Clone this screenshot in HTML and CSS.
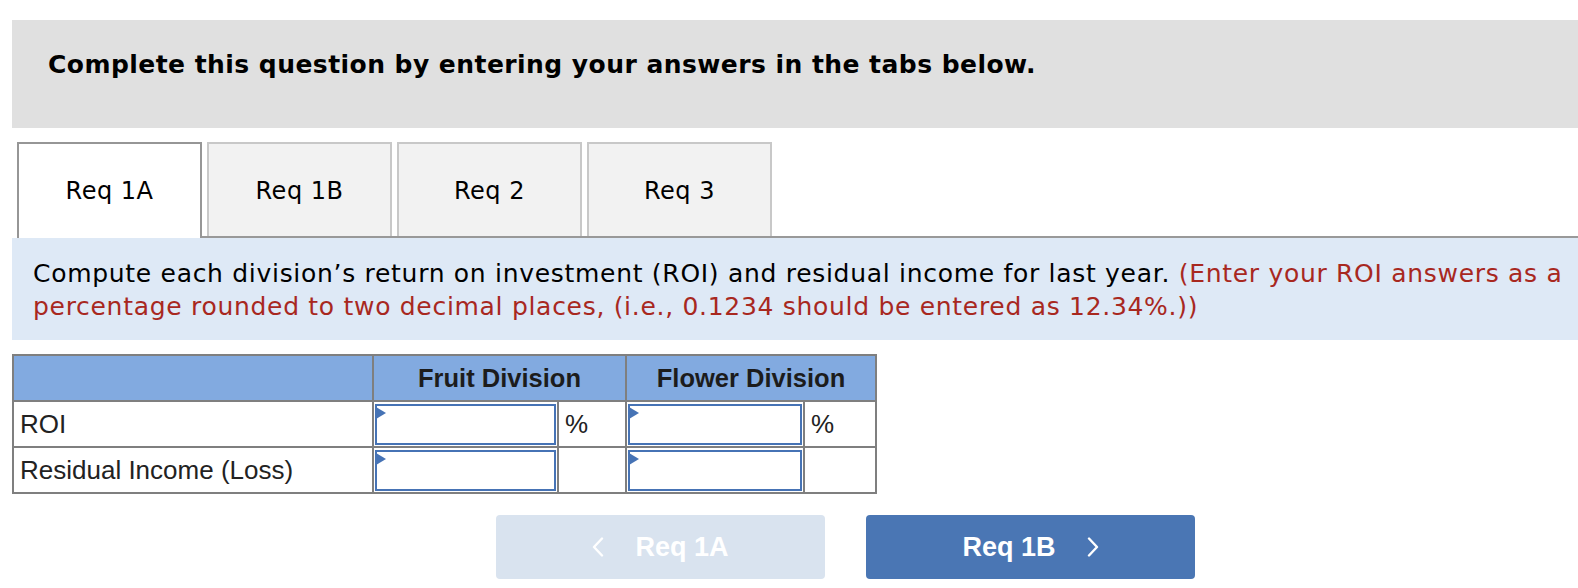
FILE: index.html
```html
<!DOCTYPE html>
<html lang="en">
<head>
<meta charset="utf-8">
<title>Complete this question</title>
<link rel="stylesheet" href="styles.css">
</head>
<body>
<div class="page">
  <div class="banner">Complete this question by entering your answers in the tabs below.</div>

  <div class="tabs">
    <div class="tab active">Req 1A</div>
    <div class="tab">Req 1B</div>
    <div class="tab">Req 2</div>
    <div class="tab">Req 3</div>
  </div>

  <div class="instructions">Compute each division’s return on investment (ROI) and residual income for last year. <span class="hint">(Enter your ROI answers as a percentage rounded to two decimal places, (i.e., 0.1234 should be entered as 12.34%.))</span></div>

  <table class="grid">
    <colgroup>
      <col class="c-label">
      <col class="c-in1">
      <col class="c-pct1">
      <col class="c-in2">
      <col class="c-pct2">
    </colgroup>
    <thead>
      <tr>
        <th></th>
        <th colspan="2">Fruit Division</th>
        <th colspan="2">Flower Division</th>
      </tr>
    </thead>
    <tbody>
      <tr>
        <td class="label">ROI</td>
        <td class="entry"><div class="box"></div></td>
        <td class="unit">%</td>
        <td class="entry"><div class="box"></div></td>
        <td class="unit">%</td>
      </tr>
      <tr>
        <td class="label">Residual Income (Loss)</td>
        <td class="entry"><div class="box"></div></td>
        <td class="unit"></td>
        <td class="entry"><div class="box"></div></td>
        <td class="unit"></td>
      </tr>
    </tbody>
  </table>

  <div class="nav">
    <div class="btn prev">
      <svg class="chev" width="12" height="20" viewBox="0 0 12 20"><polyline points="10,1.5 2,10 10,18.5" fill="none" stroke="#fff" stroke-width="2.4" stroke-linecap="round" stroke-linejoin="round"/></svg>
      <span>Req 1A</span>
    </div>
    <div class="btn next">
      <span>Req 1B</span>
      <svg class="chev" width="12" height="20" viewBox="0 0 12 20"><polyline points="2,1.5 10,10 2,18.5" fill="none" stroke="#fff" stroke-width="2.4" stroke-linecap="round" stroke-linejoin="round"/></svg>
    </div>
  </div>
</div>
</body>
</html>
```
FILE: styles.css
```css
html, body {
  margin: 0;
  padding: 0;
  background: #ffffff;
}

.page {
  padding: 20px 0 0 12px;
  font-family: Verdana, "DejaVu Sans", sans-serif;
  color: #000;
}

.banner {
  box-sizing: border-box;
  height: 108px;
  background: #e0e0e0;
  padding: 30px 0 0 36px;
  font-weight: bold;
  font-size: 25px;
  letter-spacing: 0.45px;
  line-height: 30px;
}

.tabs {
  display: flex;
  gap: 5px;
  margin: 14px 0 0 5px;
  border-bottom: 2px solid #999999;
}

.tab {
  box-sizing: border-box;
  width: 185px;
  height: 94px;
  display: flex;
  align-items: center;
  justify-content: center;
  background: #f2f2f2;
  border: 2px solid #c8c8c8;
  border-bottom: none;
  font-size: 24px;
  letter-spacing: 0.5px;
  padding-top: 2px;
}

.tab.active {
  background: #ffffff;
  border-color: #969696;
  height: 96px;
  margin-bottom: -2px;
  padding-top: 0;
}

.instructions {
  box-sizing: border-box;
  height: 102px;
  background: #dee9f6;
  padding: 19px 0 0 21px;
  font-size: 25px;
  letter-spacing: 0.7px;
  line-height: 33px;
}

.hint {
  color: #a8281f;
}

.grid {
  margin-top: 14px;
  border-collapse: collapse;
  table-layout: fixed;
  width: 865px;
  font-family: Arial, "Liberation Sans", sans-serif;
  font-size: 26px;
  color: #222;
}

.c-label { width: 360px; }
.c-in1 { width: 185px; }
.c-pct1 { width: 68px; }
.c-in2 { width: 178px; }
.c-pct2 { width: 72px; }

.grid th,
.grid td {
  border: 2px solid #7f7f7f;
  height: 42px;
  padding: 0;
}

.grid th {
  height: 44px;
  background: #82aae0;
  font-weight: bold;
  font-size: 25.5px;
  text-align: center;
  color: #1c1c1c;
}

.grid td.label {
  padding-left: 6px;
}

.grid td.unit {
  padding-left: 6px;
}

.grid td.entry {
  padding: 1px;
}

.box {
  position: relative;
  box-sizing: border-box;
  height: 41px;
  border: 2px solid #4673b5;
  background: #fff;
}

.box::before {
  content: "";
  position: absolute;
  left: -1px;
  top: 1px;
  border-left: 10px solid #4673b5;
  border-top: 6px solid transparent;
  border-bottom: 6px solid transparent;
}

.nav {
  display: flex;
  gap: 41px;
  margin: 21px 0 0 484px;
}

.btn {
  box-sizing: border-box;
  width: 329px;
  height: 64px;
  border-radius: 4px;
  display: flex;
  align-items: center;
  justify-content: center;
  gap: 31px;
  color: #fff;
  font-family: Arial, "Liberation Sans", sans-serif;
  font-weight: bold;
  font-size: 27px;
}

.btn.prev {
  background: #d9e3ef;
}

.btn.next {
  background: #4a76b4;
}

.chev {
  display: block;
}
```
